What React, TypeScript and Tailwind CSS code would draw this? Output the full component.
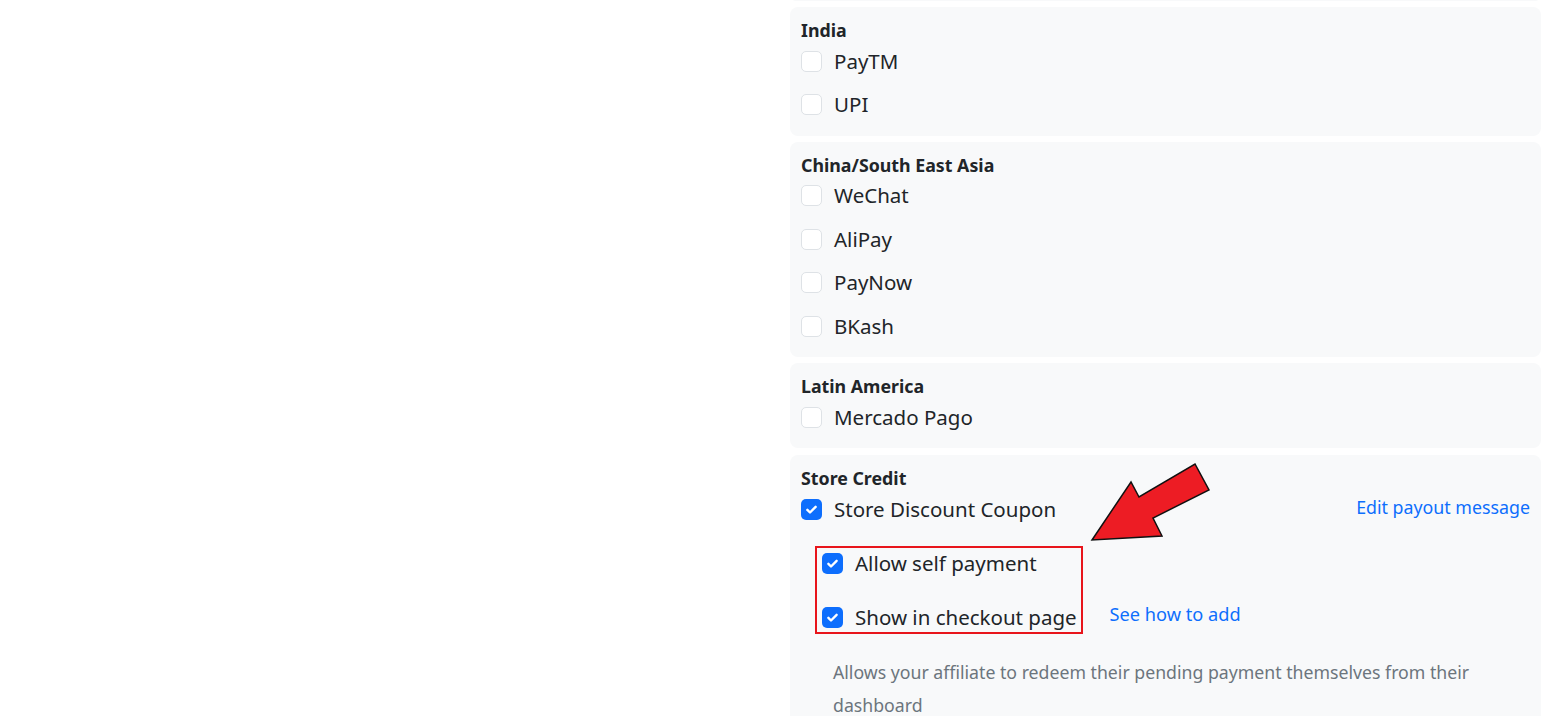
import React from "react";

const FONT = { fontFamily: '"Noto Sans", "Open Sans", Arial, sans-serif' };

function Box({ checked }: { checked?: boolean }) {
  if (checked) {
    return (
      <span className="flex h-[21px] w-[21px] shrink-0 items-center justify-center rounded-[5px] bg-[#0d6efd]">
        <svg width="15" height="15" viewBox="0 0 20 20" fill="none">
          <path d="M4.5 10.5l3.5 3.5L15.5 6.5" stroke="#fff" strokeWidth="3.2" strokeLinecap="round" strokeLinejoin="round" />
        </svg>
      </span>
    );
  }
  return <span className="h-[21px] w-[21px] shrink-0 rounded-[5px] border border-[#dee2e6] bg-white" />;
}

function Row({ label, checked, first }: { label: string; checked?: boolean; first?: boolean }) {
  return (
    <label className={`flex h-[30px] items-center gap-3 ${first ? "mt-[4px]" : "mt-[13.5px]"}`}>
      <Box checked={checked} />
      <span className="text-[20.5px] text-[#212529]">{label}</span>
    </label>
  );
}

function Panel({ title, children }: { title: string; children: React.ReactNode }) {
  return (
    <div className="shrink-0 rounded-lg bg-[#f8f9fa] px-[11px] pt-[11px] pb-[16px]">
      <div className="h-[24px] text-[17.8px] font-bold leading-[24px] text-[#212529]">{title}</div>
      {children}
    </div>
  );
}

const GROUPS = [
  { title: "India", items: ["PayTM", "UPI"] },
  { title: "China/South East Asia", items: ["WeChat", "AliPay", "PayNow", "BKash"] },
  { title: "Latin America", items: ["Mercado Pago"] },
];

export default function App() {
  return (
    <div className="relative flex h-[716px] w-[1551px] items-start overflow-hidden bg-white" style={FONT}>
      <div className="w-[790px] shrink-0" />
      <div className="flex w-[751px] shrink-0 flex-col gap-[6px]">
        <div className="-mt-[5px] h-[6px] shrink-0 rounded-b-lg bg-[#f8f9fa]" />
        {GROUPS.map((g) => (
          <Panel key={g.title} title={g.title}>
            {g.items.map((it, i) => (
              <Row key={it} label={it} first={i === 0} />
            ))}
          </Panel>
        ))}
        <div className="mt-[1px] h-[300px] shrink-0 rounded-t-lg bg-[#f8f9fa] px-[11px] pt-[11px]">
          <div className="h-[24px] text-[17.8px] font-bold leading-[24px] text-[#212529]">Store Credit</div>
          <div className="mt-[4px] flex h-[30px] items-center justify-between">
            <label className="flex items-center gap-3">
              <Box checked />
              <span className="text-[20.5px] text-[#212529]">Store Discount Coupon</span>
            </label>
            <a className="-mt-[4px] text-[17.8px] text-[#0d6efd]">Edit payout message</a>
          </div>
          <div className="ml-[21px] mt-[24px] flex flex-col gap-[24px]">
            <label className="flex h-[30px] items-center gap-3">
              <Box checked />
              <span className="text-[20.5px] text-[#212529]">Allow self payment</span>
            </label>
            <div className="flex h-[30px] items-center">
              <label className="flex items-center gap-3">
                <Box checked />
                <span className="text-[20.5px] text-[#212529]">Show in checkout page</span>
              </label>
              <a className="ml-[33px] -mt-[4px] text-[18.2px] text-[#0d6efd]">See how to add</a>
            </div>
          </div>
          <p className="ml-[32px] mt-[24px] text-[17.7px] leading-[33px] text-[#6c757d]">
            Allows your affiliate to redeem their pending payment themselves from their dashboard
          </p>
        </div>
      </div>

      {/* annotation */}
      <div className="pointer-events-none absolute left-[815px] top-[546px] h-[88px] w-[268px] border-2 border-[#e8151b]" />
      <svg className="pointer-events-none absolute left-0 top-0" width="1551" height="716">
        <polygon
          points="1092,540 1131,482 1139,497 1195,464 1209,490 1153,518 1162,536"
          fill="#ed1c24"
          stroke="#111"
          strokeWidth="1.5"
          strokeLinejoin="miter"
        />
      </svg>
    </div>
  );
}
